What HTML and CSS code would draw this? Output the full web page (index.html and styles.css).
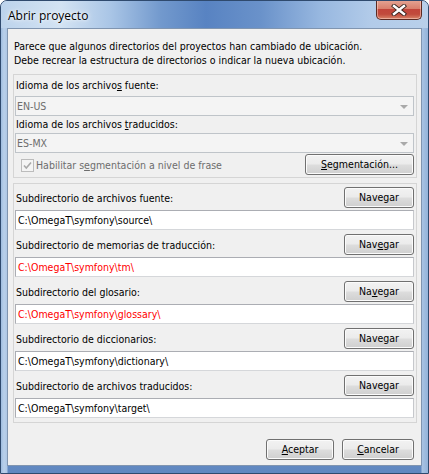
FILE: index.html
```html
<!DOCTYPE html>
<html lang="es">
<head>
<meta charset="utf-8">
<title>Abrir proyecto</title>
<link rel="stylesheet" href="styles.css">
</head>
<body>
<div class="window">
  <div class="titlebar">
    <span class="title">Abrir proyecto</span>
    <div class="close">
      <svg width="16" height="12" viewBox="0 0 16 12">
        <path d="M3 2 L13 10 M13 2 L3 10" stroke="#3a2620" stroke-width="4.2" stroke-linecap="square" fill="none"/>
        <path d="M3 2 L13 10 M13 2 L3 10" stroke="#ffffff" stroke-width="2.4" stroke-linecap="square" fill="none"/>
      </svg>
    </div>
  </div>
  <div class="client">
    <p class="intro">Parece que algunos directorios del proyectos han cambiado de ubicación.<br>Debe recrear la estructura de directorios o indicar la nueva ubicación.</p>

    <div class="panel lang">
      <div class="lbl lbl-first">Idioma de los archivo<u>s</u> fuente:</div>
      <div class="combo"><span>EN-US</span><i class="arrow"></i></div>
      <div class="lbl lbl-second">Idioma de los archivos <u>t</u>raducidos:</div>
      <div class="combo"><span>ES-MX</span><i class="arrow"></i></div>
      <div class="segrow">
        <div class="check">
          <span class="box">
            <svg width="11" height="11" viewBox="0 0 11 11"><path d="M2 5.5 L4.3 8 L9 2.5" stroke="#a9a9a9" stroke-width="1.6" fill="none"/></svg>
          </span>
          <span class="check-text">Habilitar s<u>e</u>gmentación a nivel de frase</span>
        </div>
        <button class="btn btn-seg"><u>S</u>egmentación...</button>
      </div>
    </div>

    <div class="panel dirs">
      <div class="row">
        <div class="rowhead"><span class="lbl2">Subdirectorio de archivos fuente:</span><button class="btn btn-nav">Navegar</button></div>
        <div class="field">C:\OmegaT\symfony\source\</div>
      </div>
      <div class="row">
        <div class="rowhead"><span class="lbl2">Subdirectorio de memorias de traducción:</span><button class="btn btn-nav">Nav<u>e</u>gar</button></div>
        <div class="field missing">C:\OmegaT\symfony\tm\</div>
      </div>
      <div class="row">
        <div class="rowhead"><span class="lbl2">Subdirectorio del glosario:</span><button class="btn btn-nav">Na<u>v</u>egar</button></div>
        <div class="field missing">C:\OmegaT\symfony\glossary\</div>
      </div>
      <div class="row">
        <div class="rowhead"><span class="lbl2">Subdirectorio de diccionarios:</span><button class="btn btn-nav">Navegar</button></div>
        <div class="field">C:\OmegaT\symfony\dictionary\</div>
      </div>
      <div class="row">
        <div class="rowhead"><span class="lbl2">Subdirectorio de archivos traducidos:</span><button class="btn btn-nav">Navegar</button></div>
        <div class="field">C:\OmegaT\symfony\target\</div>
      </div>
    </div>

    <div class="actions">
      <button class="btn btn-ok"><u>A</u>ceptar</button>
      <button class="btn btn-cancel"><u>C</u>ancelar</button>
    </div>
  </div>
</div>
</body>
</html>
```

FILE: styles.css
```css
* { box-sizing: border-box; }
html, body { margin: 0; padding: 0; background: #ffffff; }
body { width: 429px; height: 474px; overflow: hidden; }

.window {
  width: 429px;
  height: 474px;
  display: flex;
  flex-direction: column;
  padding: 0 6px 7px 6px;
  border-radius: 7px 7px 0 0;
  border: 1px solid #2f4a6e;
  background:
    linear-gradient(180deg, rgba(255,255,255,0.25) 0px, rgba(255,255,255,0) 28px),
    linear-gradient(90deg, #9fbde0 0px, #b9d0ea 3px, #aec7e5 6px, rgba(0,0,0,0) 7px, rgba(0,0,0,0) 420px, #a9c3e3 421px, #8fb0d8 428px),
    linear-gradient(180deg, #b7cfea 0px, #aac5e6 120px, #7ea2d1 200px, #9dbbe0 300px, #6c92c8 420px, #5f87c0 474px);
  overflow: hidden;
}

.titlebar {
  height: 27px;
  flex: none;
  display: flex;
  align-items: flex-start;
  justify-content: space-between;
  margin: 0 -6px 0 -6px;
  padding-left: 7px;
  background: linear-gradient(90deg, #bcd3ec 0px, #d3e3f3 60px, #a9c5e6 110px, #7299cd 160px, #5883c2 205px, #6a92ca 260px, #98b8e0 320px, #b2cbe9 370px, #b9d0ea 429px);
}

.title {
  font-family: "Open Sans", "Noto Sans", sans-serif;
  font-size: 12px;
  line-height: 30px;
  color: #000000;
  text-shadow: 0 0 6px rgba(255,255,255,0.95), 0 0 3px rgba(255,255,255,0.9);
}

.close {
  width: 46px;
  height: 20px;
  margin-right: 6px;
  margin-top: -1px;
  border: 1px solid #5b2a22;
  border-top: none;
  border-radius: 0 0 5px 5px;
  background: linear-gradient(180deg, #e5a595 0%, #d9806d 45%, #c2453a 50%, #c14b3c 75%, #d88468 100%);
  box-shadow: inset 0 0 0 1px rgba(255,220,210,0.5);
  display: flex;
  align-items: center;
  justify-content: center;
}

.client {
  flex: 1;
  display: flex;
  flex-direction: column;
  background: #f0f0f0;
  border: 1px solid #8095b0;
  padding: 0 4px 5px 5px;
  font-family: "DejaVu Sans Condensed", "DejaVu Sans", sans-serif;
  font-stretch: condensed;
  font-size: 10.5px;
  color: #000000;
}

u { text-decoration: underline; text-underline-offset: 1px; }

.intro {
  margin: 10px 0 0 1px;
  line-height: 14px;
}

.panel {
  border: 1px solid #d5d5d5;
  margin-top: 7px;
  width: 404px;
}

.lang { padding: 0 1px 2px 1px; }

.lbl { padding-left: 1px; }
.lbl-first { height: 21px; line-height: 21px; }
.lbl-second { height: 17px; line-height: 17px; }

.combo {
  height: 20px;
  border: 1px solid #bfc4c9;
  background: #f4f4f4;
  color: #6d6d6d;
  display: flex;
  align-items: center;
  justify-content: space-between;
  padding: 0 5px 0 1px;
  margin-right: 1px;
}

.arrow {
  width: 0;
  height: 0;
  border-left: 4px solid transparent;
  border-right: 4px solid transparent;
  border-top: 4px solid #a9a9a9;
  margin-top: 2px;
}

.segrow {
  margin-top: 1px;
  height: 21px;
  display: flex;
  align-items: center;
  justify-content: space-between;
}

.check {
  display: flex;
  align-items: center;
  color: #6d6d6d;
  padding-left: 6px;
}

.box {
  width: 13px;
  height: 13px;
  border: 1px solid #bcbcbc;
  background: #f4f4f4;
  display: flex;
  align-items: center;
  justify-content: center;
  margin-right: 2px;
  margin-top: 1px;
}

.btn {
  font: inherit;
  color: #000000;
  height: 21px;
  padding: 0;
  border: 1px solid #707070;
  border-radius: 3px;
  background: linear-gradient(180deg, #f2f2f2 0%, #ebebeb 48%, #dddddd 52%, #cfcfcf 100%);
  box-shadow: inset 0 0 0 1px #fbfbfb;
  line-height: 19px;
  text-align: center;
}

.btn-seg { width: 109px; margin-right: 1px; }
.btn-nav { width: 70px; margin-right: 1px; }

.dirs {
  margin-top: 5px;
  padding: 3px 1px 4px 1px;
  display: flex;
  flex-direction: column;
  gap: 4px;
}

.row {
  display: flex;
  flex-direction: column;
  gap: 2px;
}

.rowhead {
  height: 21px;
  display: flex;
  align-items: center;
  justify-content: space-between;
}

.lbl2 { padding-left: 1px; }

.field {
  height: 20px;
  background: #ffffff;
  border: 1px solid #abadb3;
  border-right-color: #c6c8cc;
  border-bottom-color: #d5d7da;
  line-height: 18px;
  padding-left: 2px;
  margin-right: 1px;
  white-space: nowrap;
}

.missing { color: #ff0000; }

.actions {
  margin-top: auto;
  display: flex;
  justify-content: flex-end;
  gap: 8px;
  padding-right: 3px;
}

.btn-ok { width: 68px; }
.btn-cancel { width: 72px; }
```
